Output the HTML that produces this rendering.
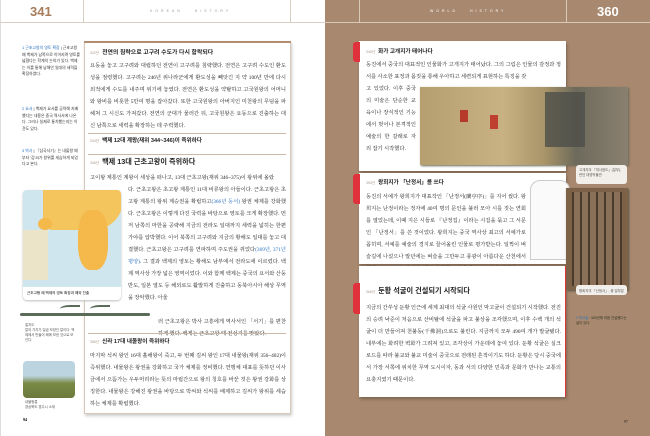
<!DOCTYPE html>
<html><head><meta charset="utf-8"><style>
*{margin:0;padding:0;box-sizing:border-box}
body{width:650px;height:436px;overflow:hidden;position:relative;font-family:"Liberation Serif","Noto Serif CJK SC","Noto Sans CJK KR",serif;background:#fff}
.abs{position:absolute}
.l{left:0;top:0;width:325px;height:436px;background:#fff;border-left:1px solid #ddd}
.r{left:325px;top:0;width:325px;height:436px;background:#a8896f}
.hdr{top:0;height:23px;border-bottom:1px solid #cbbfb3}
.p{font-size:5.3px;line-height:12px;color:#222;text-align:justify}
.h{font-family:"Liberation Sans","Noto Sans CJK KR",sans-serif;font-weight:bold;color:#222}
.yr{font-size:3.5px;color:#a98;font-weight:normal;margin-right:3px}
.sep{border-top:1px solid #cbb9a8}
.note{font-family:"Liberation Sans","Noto Sans CJK KR",sans-serif;font-size:3.9px;line-height:6.5px;color:#333}
.tab{width:7px;background:#e0323c;border-radius:3px 0 0 3px}
</style></head><body>
<div class="abs l"></div>
<div class="abs r"></div>
<div class="abs hdr" style="left:0;width:325px;border-bottom-color:#d8cfc4"></div>
<div class="abs" style="left:83px;top:0;width:1px;height:23px;background:#d8cfc4"></div>
<div class="abs" style="left:290px;top:0;width:1px;height:23px;background:#d8cfc4"></div>
<div class="abs h" style="left:30px;top:4px;font-size:13px;color:#a97c5a">341</div>
<div class="abs" style="left:150px;top:9px;font-size:3.5px;letter-spacing:3px;color:#999;font-family:'Liberation Sans',sans-serif">KOREAN &nbsp; HISTORY</div>
<div class="abs" style="left:325px;top:22px;width:325px;height:1px;background:#d7c8b8"></div>
<div class="abs" style="left:359px;top:0;width:1px;height:23px;background:#d7c8b8"></div>
<div class="abs" style="left:566px;top:0;width:1px;height:23px;background:#d7c8b8"></div>
<div class="abs" style="left:430px;top:9px;font-size:3.5px;letter-spacing:3px;color:#fff;font-family:'Liberation Sans',sans-serif">WORLD &nbsp; HISTORY</div>
<div class="abs h" style="left:597px;top:4px;font-size:13px;color:#fff">360</div>

<div class="abs note" style="left:22px;top:45px;width:58px"><span style="color:#2a6fc0">1 근초고왕의 영토 확장</span> | 근초고왕 때 백제가 남쪽으로 이어지며 영토를 넓혔다는 학계의 논의가 있다. 백제는 이를 통해 남해안 일대의 세력을 확장하였다.</div>
<div class="abs note" style="left:22px;top:106px;width:58px"><span style="color:#2a6fc0">2 요서</span> | 백제가 요서를 공략해 지배했다는 내용은 중국 역사서에 나온다. 그러나 실제로 통치했는지는 이견도 있다.</div>
<div class="abs note" style="left:22px;top:148px;width:58px"><span style="color:#2a6fc0">3 박사</span> | 『삼국사기』는 내물왕 때부터 '김'씨가 왕위를 세습하게 되었다고 본다.</div>

<div class="abs" style="left:84px;top:41px;width:207px;height:373px;background:#fff;border:1px solid #d9c8b8;box-shadow:1px 2px 3px #ccc"></div>
<div class="abs" style="left:84px;top:41px;width:207px;height:2px;background:#b08d6f"></div>
<div class="abs" style="left:90px;top:47px;width:196px">
<div class="h" style="font-size:5.9px"><span class="yr">342년</span>전연의 침략으로 고구려 수도가 다시 함락되다</div>
<div class="p" style="margin-top:4px">요동을 놓고 고구려와 대립하던 전연이 고구려를 침략했다. 전연은 고구려 수도인 환도성을 점령했다. 고구려는 246년 위나라군에게 환도성을 빼앗긴 지 약 100년 만에 다시 외적에게 수도를 내주며 위기에 놓였다. 전연은 환도성을 약탈하고 고국원왕의 어머니와 왕비를 비롯한 5만여 명을 잡아갔다. 또한 고국원왕의 아버지인 미천왕의 무덤을 파헤쳐 그 시신도 가져갔다. 전연의 군대가 물러간 뒤, 고국원왕은 요동으로 진출하는 대신 남쪽으로 세력을 확장하는 데 주력했다.</div>
</div>
<div class="abs sep" style="left:88px;top:133px;width:198px"></div>
<div class="abs h" style="left:90px;top:136px;font-size:5.6px"><span class="yr">344년</span>백제 12대 계왕(재위 344~346)이 즉위하다</div>
<div class="abs sep" style="left:88px;top:154px;width:198px"></div>
<div class="abs h" style="left:90px;top:157px;font-size:7.2px"><span class="yr">346년</span>백제 13대 근초고왕이 즉위하다</div>
<div class="abs p" style="left:90px;top:172px;width:196px">고이왕 계통인 계왕이 세상을 떠나고, 13대 근초고왕(재위 346~375)이 왕위에 올랐</div>
<div class="abs p" style="left:128px;top:184px;width:158px">다. 근초고왕은 초고왕 계통인 11대 비류왕의 아들이다. 근초고왕은 초고왕 계통의 왕위 계승권을 확립하고<span style="color:#2a6fc0">(366년 동서)</span> 왕권 체제를 강화했다. 근초고왕은 이렇게 다진 국력을 바탕으로 영토를 크게 확장했다. 먼저 남쪽의 마한을 공략해 지금의 전라도 일대까지 세력을 넓히는 한편 가야를 압박했다. 이어 북쪽의 고구려와 지금의 황해도 일대를 놓고 대결했다. 근초고왕은 고구려를 연파하며 주도권을 쥐었다<span style="color:#2a6fc0">(369년, 371년 평양)</span>. 그 결과 백제의 영토는 황해도 남부에서 전라도에 이르렀다. 백제 역사상 가장 넓은 영역이었다. 이와 함께 백제는 중국의 요서와 산둥반도, 일본 열도 등 해외로도 활발하게 진출하고 동북아시아 해상 무역을 장악했다. 아울</div>
<div class="abs p" style="left:158px;top:316px;width:128px">러 근초고왕은 박사 고흥에게 역사서인 「서기」를 편찬하게 했다. 백제는 근초고왕 때 전성기를 맞았다.</div>
<div class="abs sep" style="left:88px;top:333px;width:198px"></div>
<div class="abs h" style="left:90px;top:337px;font-size:5.6px"><span class="yr">356년</span>신라 17대 내물왕이 즉위하다</div>
<div class="abs p" style="left:90px;top:350px;width:196px">마지막 석씨 왕인 16대 흘해왕이 죽고, 두 번째 김씨 왕인 17대 내물왕(재위 356~402)이 즉위했다. 내물왕은 왕권을 강화하고 국가 체제를 정비했다. 연맹체 대표를 뜻하던 이사금에서 으뜸가는 우두머리라는 뜻의 마립간으로 왕의 칭호를 바꾼 것은 왕권 강화를 상징한다. 내물왕은 강해진 왕권을 바탕으로 박씨와 석씨를 배제하고 김씨가 왕위를 세습하는 체제를 확립했다.</div>

<div class="abs" style="left:23px;top:190px;width:98px;height:110px;background:#cfe6ef;border-radius:4px;overflow:hidden;box-shadow:0 1px 2px #bbb">
<div class="abs" style="left:20px;top:0;width:80px;height:40px;background:#f3c55c;border-radius:0 0 30px 10px"></div>
<div class="abs" style="left:55px;top:20px;width:30px;height:60px;background:#f5b84a;border-radius:40%"></div>
<div class="abs" style="left:0;top:40px;width:25px;height:50px;background:#ece4c8"></div>
<div class="abs" style="left:15px;top:28px;width:14px;height:12px;background:#f5b84a;border-radius:50%"></div>
<div class="abs" style="left:0;top:97px;width:98px;height:13px;background:#fff;font-size:3.6px;padding:4px 4px;font-family:'Liberation Sans',sans-serif">근초고왕 때 백제의 영토 확장과 해외 진출</div>
</div>
<div class="abs" style="left:20px;top:313px;width:130px;height:3px;background:#5a6b5a;border-radius:2px"></div>
<div class="abs" style="left:60px;top:305px;width:20px;height:8px;border-top:2px solid #5a6b5a;border-radius:50% 0 0 0"></div>
<div class="abs" style="left:90px;top:305px;width:20px;height:8px;border-top:2px solid #5a6b5a;border-radius:50% 0 0 0"></div>
<div class="abs note" style="left:25px;top:323px;width:50px;font-size:3.4px;line-height:5px;color:#555">칠지도<br>칼의 가지가 일곱 모양인 칼이다. 백제에서 만들어 왜에 보낸 것으로 보인다.</div>
<div class="abs" style="left:23px;top:361px;width:52px;height:37px;border-radius:4px;background:linear-gradient(#bcd4e0 0,#bcd4e0 40%,#7a8a45 60%,#6b7a3c)"></div>
<div class="abs note" style="left:25px;top:400px;width:50px;font-size:3.4px;line-height:5px;color:#555">내물왕릉<br>경상북도 경주시 소재</div>
<div class="abs" style="left:23px;top:417px;font-size:4px;font-weight:bold">94</div>

<div class="abs" style="left:359px;top:41px;width:207px;height:130px;background:#fff;box-shadow:1px 2px 3px #7a6450"></div>
<div class="abs tab" style="left:353px;top:42px;height:20px"></div>
<div class="abs h" style="left:366px;top:47px;font-size:5.6px"><span class="yr">345년</span>화가 고개지가 태어나다</div>
<div class="abs p" style="left:366px;top:59px;width:195px">동진에서 중국의 대표적인 인물화가 고개지가 태어났다. 그의 그림은 인물의 감정과 정서를 사소한 표정과 몸짓을 통해 우아하고 세련되게 표현하는 특징을 갖</div>
<div class="abs p" style="left:366px;top:83px;width:50px">고 있었다. 이후 중국의 미술은 단순한 교육이나 장식적인 기능에서 벗어나 본격적인 예술의 한 갈래로 자리 잡기 시작했다.</div>
<div class="abs" style="left:420px;top:87px;width:208px;height:78px;background:linear-gradient(90deg,#b59e70,#c8b283 40%,#a89468 60%,#6d6a5c 75%,#8a8070);box-shadow:1px 1px 2px #665"></div>
<div class="abs" style="left:545px;top:92px;width:40px;height:55px;background:#4e4f4a;opacity:.8"></div>
<div class="abs" style="left:460px;top:110px;width:8px;height:12px;background:#b63a2a"></div>
<div class="abs" style="left:490px;top:115px;width:8px;height:14px;background:#c04030"></div>
<div class="abs" style="left:576px;top:165px;width:51px;height:19px;background:#f2eeea;border-radius:3px;font-size:3.4px;line-height:5px;padding:3px;color:#555;font-family:'Liberation Sans',sans-serif">고개지의 「여사잠도」(일부), 런던 대영박물관</div>

<div class="abs" style="left:359px;top:173px;width:207px;height:91px;background:#fff;box-shadow:1px 2px 3px #7a6450"></div>
<div class="abs tab" style="left:353px;top:174px;height:30px"></div>
<div class="abs h" style="left:366px;top:178px;font-size:5.6px"><span class="yr">353년</span>왕희지가 「난정서」를 쓰다</div>
<div class="abs" style="left:530px;top:180px;width:40px;height:80px;border:1px solid #ccc;border-radius:10px 10px 0 0;background:#fafafa"></div>
<div class="abs p" style="left:366px;top:191px;width:160px">동진의 서예가 왕희지가 대표작인 「난정서(蘭亭序)」를 지어 썼다. 왕희지는 난정이라는 정자에 40여 명의 문인을 불러 모아 시를 짓는 연회를 열었는데, 이때 지은 시들로 『난정집』이라는 시집을 묶고 그 서문인 「난정서」를 쓴 것이었다. 왕희지는 중국 역사상 최고의 서예가로 꼽히며, 서예를 예술의 경지로 끌어올린 인물로 평가받는다. 일찍이 벼슬길에 나섰으나 말년에는 벼슬을 그만두고 풍광이 아름다운 산천에서 청담<span style="color:#2a6fc0">(344년 동서)</span>과 약초 캐는 일에 몰두하며 여유로운 삶을 살았다.</div>
<div class="abs" style="left:566px;top:188px;width:62px;height:102px;background:#7d6248;box-shadow:1px 1px 2px #554"></div>
<div class="abs" style="left:572px;top:192px;width:50px;height:94px;background:repeating-linear-gradient(90deg,#4a3a2a 0 2px,#8a7058 2px 8px)"></div>
<div class="abs" style="left:576px;top:285px;width:51px;height:10px;background:#f2eeea;border-radius:3px;font-size:3.4px;padding:3px 3px;color:#555;font-family:'Liberation Sans',sans-serif">왕희지의 「난정서」, 중 일부분</div>

<div class="abs" style="left:359px;top:266px;width:207px;height:131px;background:#fff;border-right:1px solid #d33;box-shadow:1px 2px 3px #7a6450"></div>
<div class="abs tab" style="left:353px;top:283px;height:31px"></div>
<div class="abs h" style="left:366px;top:286px;font-size:7.2px"><span class="yr">366년</span>둔황 석굴이 건설되기 시작되다</div>
<div class="abs p" style="left:366px;top:302px;width:195px">지금의 간쑤성 둔황 인근에 세계 최대의 석굴 사원인 막고굴이 건설되기 시작했다. 전진의 승려 낙준이 처음으로 산비탈에 석굴을 파고 불상을 조각했으며, 이후 수백 개의 석굴이 더 만들어져 천불동(千佛洞)으로도 불린다. 지금까지 모두 490여 개가 발굴됐다. 내부에는 화려한 벽화가 그려져 있고, 조각상이 가운데에 놓여 있다. 둔황 석굴은 실크로드를 따라 불교와 불교 미술이 중국으로 전래된 흔적이기도 하다. 둔황은 당시 중국에서 가장 서쪽에 위치한 무역 도시이자, 동과 서의 다양한 민족과 문화가 만나는 교통의 요충지였기 때문이다.</div>
<div class="abs note" style="left:576px;top:316px;width:52px;font-size:3.4px;line-height:5px;color:#332"><span style="color:#2a6fc0">1 막고굴</span> : 300년에 처음 건설됐다는 설이 있다.</div>
<div class="abs" style="left:624px;top:419px;font-size:4px;color:#222">97</div>
</body></html>
